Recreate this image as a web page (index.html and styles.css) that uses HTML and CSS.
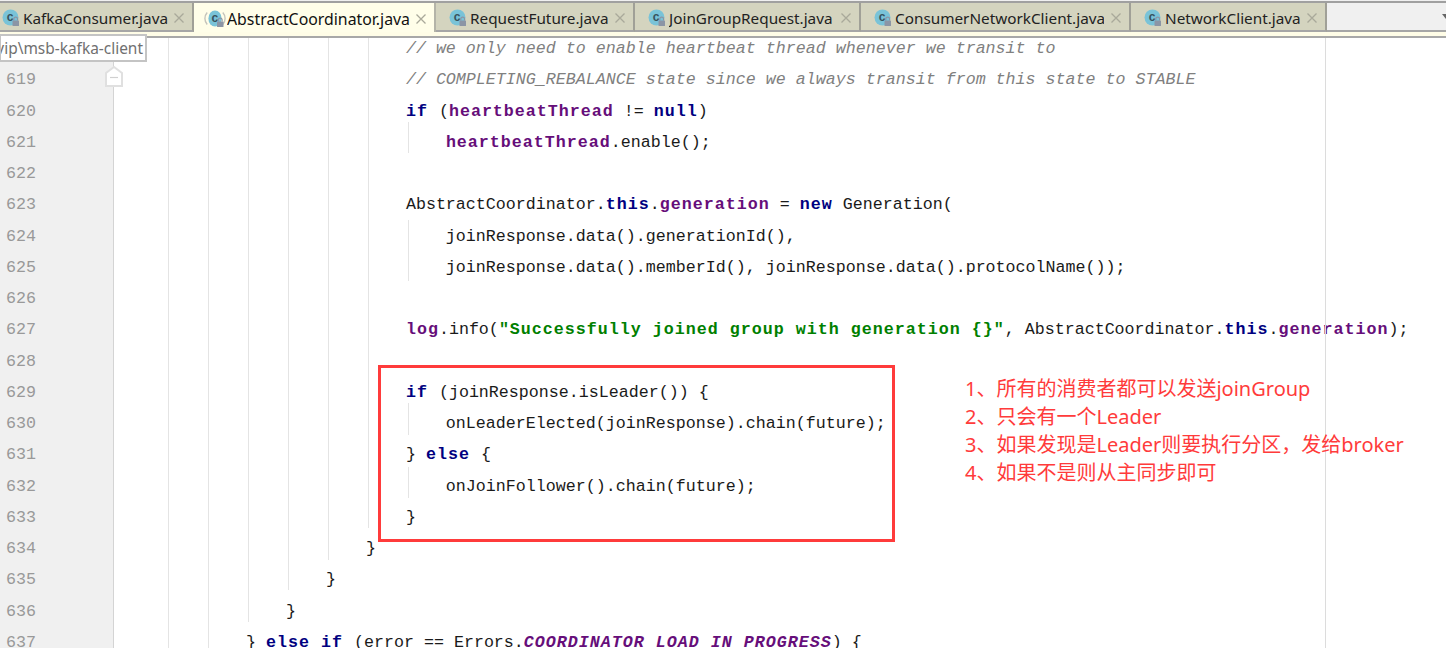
FILE: index.html
```html
<!DOCTYPE html>
<html lang="zh">
<head>
<meta charset="utf-8">
<title>AbstractCoordinator.java</title>
<link rel="stylesheet" href="styles.css">
</head>
<body>
<svg class="defs" width="0" height="0">
  <symbol id="cls" viewBox="0 0 18 18">
    <circle cx="8.5" cy="8.5" r="8" fill="#79c3d8"/>
    <text x="8.2" y="12.2" class="cls-letter">c</text>
    <rect x="10.5" y="11.5" width="6.5" height="5.5" rx=".6" fill="#8b95a5"/>
    <path d="M11.8 11.5V10a1.9 1.9 0 0 1 3.8 0v1.5" fill="none" stroke="#8b95a5" stroke-width="1.2"/>
  </symbol>
  <symbol id="cls-active" viewBox="0 0 22 18">
    <path d="M3.2 2.5a9 9 0 0 0 0 12M18.8 2.5a9 9 0 0 1 0 12" fill="none" stroke="#c4c4bc" stroke-width="1.4"/>
    <ellipse cx="11" cy="8.5" rx="6.6" ry="8" fill="#79c3d8"/>
    <text x="10.8" y="12.2" class="cls-letter">c</text>
    <rect x="13" y="11.5" width="6.5" height="5.5" rx=".6" fill="#8b95a5"/>
    <path d="M14.3 11.5V10a1.9 1.9 0 0 1 3.8 0v1.5" fill="none" stroke="#8b95a5" stroke-width="1.2"/>
  </symbol>
  <symbol id="close" viewBox="0 0 10 10">
    <path d="M.5.5l9 9M9.5.5l-9 9" stroke="#a9a99a" stroke-width="1.3" fill="none"/>
  </symbol>
</svg>

<header class="tabbar">
  <nav class="tabs">
    <div class="tab tab-first"><svg class="icon"><use href="#cls"/></svg><span class="name">KafkaConsumer.java</span><svg class="x"><use href="#close"/></svg></div>
    <div class="tab tab-active"><svg class="icon-active"><use href="#cls-active"/></svg><span class="name">AbstractCoordinator.java</span><svg class="x"><use href="#close"/></svg></div>
    <div class="tab tab-future"><svg class="icon"><use href="#cls"/></svg><span class="name">RequestFuture.java</span><svg class="x"><use href="#close"/></svg></div>
    <div class="tab tab-join"><svg class="icon"><use href="#cls"/></svg><span class="name">JoinGroupRequest.java</span><svg class="x"><use href="#close"/></svg></div>
    <div class="tab tab-consumer"><svg class="icon"><use href="#cls"/></svg><span class="name name-clipped">ConsumerNetworkClient.java</span><svg class="x"><use href="#close"/></svg></div>
    <div class="tab tab-network"><svg class="icon"><use href="#cls"/></svg><span class="name">NetworkClient.java</span><svg class="x"><use href="#close"/></svg></div>
    <div class="tab-rest"><span class="more"></span></div>
  </nav>
  <div class="strip"></div>
</header>

<main class="editor">
  <div class="gutter">
    <div class="row"></div>
    <div class="row">619</div>
    <div class="row">620</div>
    <div class="row">621</div>
    <div class="row">622</div>
    <div class="row">623</div>
    <div class="row">624</div>
    <div class="row">625</div>
    <div class="row">626</div>
    <div class="row">627</div>
    <div class="row">628</div>
    <div class="row">629</div>
    <div class="row">630</div>
    <div class="row">631</div>
    <div class="row">632</div>
    <div class="row">633</div>
    <div class="row">634</div>
    <div class="row">635</div>
    <div class="row">636</div>
    <div class="row">637</div>
  </div>
  <div class="code">
    <div class="row">                        <i class="c">// we only need to enable heartbeat thread whenever we transit to</i></div>
    <div class="row">                        <i class="c">// COMPLETING_REBALANCE state since we always transit from this state to STABLE</i></div>
    <div class="row">                        <b class="k">if </b>(<b class="f">heartbeatThread</b> != <b class="k">null</b>)</div>
    <div class="row">                            <b class="f">heartbeatThread</b>.enable();</div>
    <div class="row"></div>
    <div class="row">                        AbstractCoordinator.<b class="k">this</b>.<b class="f">generation</b> = <b class="k">new</b> Generation(</div>
    <div class="row">                            joinResponse.data().generationId(),</div>
    <div class="row">                            joinResponse.data().memberId(), joinResponse.data().protocolName());</div>
    <div class="row"></div>
    <div class="row">                        <b class="f">log</b>.info(<b class="s">"Successfully joined group with generation {}"</b>, AbstractCoordinator.<b class="k">this</b>.<b class="f">generation</b>);</div>
    <div class="row"></div>
    <div class="row">                        <b class="k">if </b>(joinResponse.isLeader()) {</div>
    <div class="row">                            onLeaderElected(joinResponse).chain(future);</div>
    <div class="row">                        } <b class="k">else </b>{</div>
    <div class="row">                            onJoinFollower().chain(future);</div>
    <div class="row">                        }</div>
    <div class="row">                    }</div>
    <div class="row">                }</div>
    <div class="row">            }</div>
    <div class="row">        } <b class="k">else if </b>(error == Errors.<b class="fi">COORDINATOR_LOAD_IN_PROGRESS</b>) {</div>
  </div>
  <div class="guide g168"></div>
  <div class="guide g208"></div>
  <div class="guide g248"></div>
  <div class="guide g288"></div>
  <div class="guide g328"></div>
  <div class="guide g368"></div>
  <div class="guide n621"></div>
  <div class="guide n624"></div>
  <div class="guide n630"></div>
  <div class="guide n632"></div>
  <div class="margin-line"></div>
  <svg class="fold" viewBox="0 0 18 21"><path d="M1 20V7l8-6 8 6v13z" fill="#fff" stroke="#e0e0e0" stroke-width="2"/><path d="M5 11.500h8" stroke="#d0d0d0" stroke-width="1.2"/></svg>
</main>

<div class="tooltip"><span>vip\msb-kafka-client</span></div>
<div class="redbox"></div>
<ol class="notes">
  <li>1、所有的消费者都可以发送joinGroup</li>
  <li>2、只会有一个Leader</li>
  <li>3、如果发现是Leader则要执行分区，发给broker</li>
  <li>4、如果不是则从主同步即可</li>
</ol>
</body>
</html>
```
FILE: styles.css
```css
* { box-sizing: border-box; }
html, body { margin: 0; padding: 0; height: 100%; }
body {
  width: 1446px;
  height: 648px;
  overflow: hidden;
  position: relative;
  background: #fff;
  font-family: "Noto Sans", "Noto Sans CJK SC", sans-serif;
}
.defs { position: absolute; }
.cls-letter {
  font-family: "Liberation Sans", sans-serif;
  font-size: 12px;
  font-weight: bold;
  fill: #37525e;
  text-anchor: middle;
}

.tabbar { height: 38px; padding-top: 1px; background: #f0f0f0; }
.tabs { display: flex; height: 31px; border-top: 2px solid #a0a0a0; }
.tab {
  display: flex;
  align-items: center;
  height: 100%;
  padding: 2px 8px 0 13px;
  background: #d4d4bf;
  border-right: 2px solid #a0a097;
  border-bottom: 2px solid #a6a6a6;
  font-size: 15.3px;
  color: #222;
}
.tab-first { width: 194px; padding-left: 2px; }
.tab-active { width: 242px; padding-left: 10px; background: #fffee9; border-bottom: 0; border-right-color: #b4b4a8; color: #111; font-size: 15.85px; }
.tab-future { width: 199px; }
.tab-join { width: 226px; }
.tab-consumer { width: 270px; }
.tab-network { width: 196px; }
.tab-rest { flex: 1; display: flex; justify-content: flex-end; align-items: center; overflow: hidden; border-bottom: 2px solid #a6a6a6; }
.more { width: 0; height: 0; margin-right: -4px; border: 4px solid transparent; border-top: 5px solid #666; border-bottom: 0; }
.icon { width: 18px; height: 18px; flex: none; margin-right: 3px; }
.icon-active { width: 22px; height: 18px; flex: none; margin-right: 1px; }
.name { flex: 1; min-width: 0; overflow: hidden; white-space: nowrap; }
.name-clipped { margin-right: 7px; }
.x { width: 10px; height: 10px; flex: none; }
.strip { height: 6px; background: #fffde7; border-bottom: 2px solid #a8a8a8; }

.editor { position: relative; display: flex; height: 610px; overflow: hidden; }
.row { height: 31.25px; line-height: 31.25px; white-space: pre; }
.gutter {
  width: 114px;
  flex: none;
  margin-top: -5px;
  padding-left: 6px;
  height: 640px;
  background: #f0f0f0;
  border-right: 1px solid #d4d4d4;
  font: 16.667px "Liberation Mono", monospace;
  color: #999;
}
.code {
  flex: 1;
  margin-top: -5px;
  padding-left: 52px;
  font: 16.667px "Liberation Mono", monospace;
  color: #1a1a1a;
}
.code b { letter-spacing: 1px; }
.c { color: #808080; font-style: italic; }
.k { color: #000080; }
.f { color: #660e7a; }
.fi { color: #660e7a; font-style: italic; }
.s { color: #008000; }

.guide { position: absolute; width: 1px; background: #e4e4e4; top: 0; }
.g168 { left: 168px; height: 610px; }
.g208 { left: 208px; height: 610px; }
.g248 { left: 248px; height: 584px; }
.g288 { left: 288px; height: 552px; }
.g328 { left: 328px; height: 522px; }
.g368 { left: 368px; height: 490px; }
.n621 { left: 408px; top: 84px; height: 31px; }
.n624 { left: 408px; top: 182px; height: 61px; }
.n630 { left: 408px; top: 365px; height: 32px; }
.n632 { left: 408px; top: 429px; height: 31px; }
.margin-line { position: absolute; left: 1325px; top: 0; width: 1px; height: 100%; background: #dcdcdc; }
.fold { position: absolute; left: 105px; top: 28px; width: 18px; height: 21px; }

.tooltip {
  position: absolute;
  left: -1px;
  top: 34px;
  width: 148px;
  height: 28px;
  display: flex;
  justify-content: flex-end;
  align-items: center;
  overflow: hidden;
  padding-right: 2px;
  background: #fff;
  border: 2px solid #c4c4c4;
  font-size: 15.45px;
  color: #707070;
  white-space: nowrap;
}
.tooltip span { flex: none; }
.redbox {
  position: absolute;
  left: 378px;
  top: 365px;
  width: 517px;
  height: 177px;
  border: 3px solid #ff3b3b;
}
.notes {
  position: absolute;
  left: 965px;
  top: 375px;
  margin: 0;
  padding: 0;
  list-style: none;
  font: 20px/28px "Noto Sans", "Noto Sans CJK SC", sans-serif;
  color: #ff3b3b;
  white-space: nowrap;
}
```
